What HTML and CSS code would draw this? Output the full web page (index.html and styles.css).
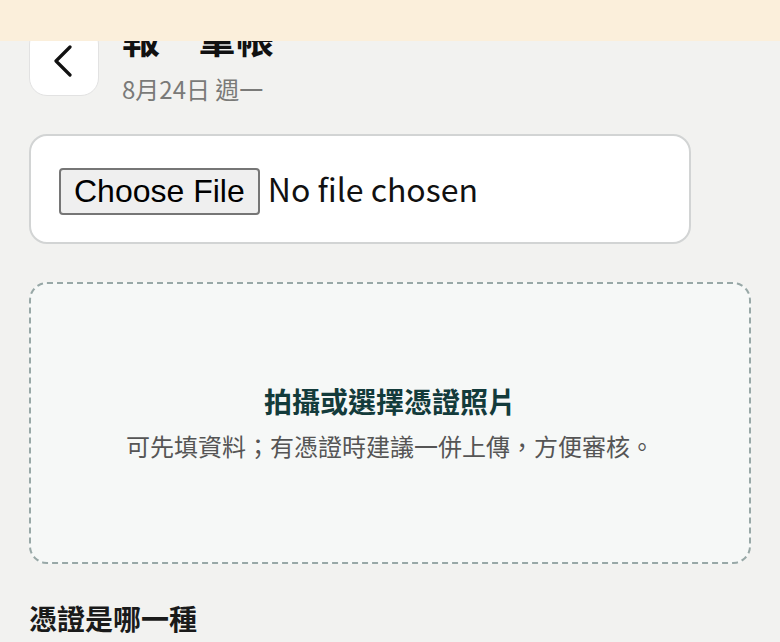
FILE: index.html
```html
<!DOCTYPE html>
<html lang="zh-Hant">
<head>
<meta charset="utf-8">
<title>報一筆帳</title>
<link rel="stylesheet" href="styles.css">
</head>
<body>
<div class="banner">
  <p class="banner-text">目前處於離線狀態，資料會先存在本機，連線後同步。<a href="#" class="banner-link">重試</a></p>
</div>
<main class="page">
  <header class="header">
    <button class="back" type="button" aria-label="返回">
      <svg width="20" height="32" viewBox="0 0 20 32" fill="none"><path d="M16 2 L2 16 L16 30" stroke="#111" stroke-width="3.2" stroke-linecap="round" stroke-linejoin="round"/></svg>
    </button>
    <div class="heading">
      <h1 class="title">報一筆帳</h1>
      <div class="date">8月24日 週一</div>
    </div>
  </header>

  <div class="file-card">
    <input class="file-input" type="file" accept="image/*">
  </div>

  <div class="drop">
    <div class="drop-title">拍攝或選擇憑證照片</div>
    <div class="drop-sub">可先填資料；有憑證時建議一併上傳，方便審核。</div>
  </div>

  <h2 class="section-title">憑證是哪一種</h2>
</main>
</body>
</html>
```
FILE: styles.css
```css
* { box-sizing: border-box; }
html, body { margin: 0; padding: 0; }
body {
  background: #f2f2f0;
  font-family: "Noto Sans CJK TC", "Noto Sans", sans-serif;
  color: #1a1a1a;
  overflow: hidden;
}
.banner {
  position: fixed;
  top: 0; left: 0; right: 0;
  height: 41px;
  background: #fbefdb;
  overflow: hidden;
  z-index: 5;
}
.banner-text {
  margin: -26px 0 0 0;
  padding-left: 222px;
  font-size: 24px;
  line-height: 24px;
  color: #c47a1c;
  white-space: nowrap;
}
.banner-link {
  color: #6a3900;
  text-decoration: underline;
  text-decoration-thickness: 2px;
}
.page {
  padding: 15px 29px 0;
}
.header {
  display: flex;
  align-items: flex-start;
  gap: 23px;
}
.back {
  margin-top: 11px;
  width: 70px;
  height: 70px;
  flex: none;
  background: #fff;
  border: 1px solid #e2e2e2;
  border-radius: 18px;
  display: flex;
  align-items: center;
  justify-content: center;
  padding: 0;
}
.heading { display: flex; flex-direction: column; }
.title {
  margin: -2px 0 0;
  font-size: 38px;
  font-weight: 700;
  line-height: 47px;
  color: #111;
}
.date {
  margin-top: 11px;
  font-size: 24px;
  line-height: 36px;
  color: #7a7a78;
}
.file-card {
  margin-top: 27px;
  width: 662px;
  height: 110px;
  background: #fff;
  border: 2px solid #d2d4d4;
  border-radius: 18px;
  padding: 29px 28px;
}
.file-input {
  font-family: "Noto Sans CJK TC", "Noto Sans", sans-serif;
  font-size: 32px;
  color: #111;
}
.file-input::file-selector-button {
  font-family: "Liberation Sans", Arial, sans-serif;
  font-size: 32px;
  padding: 3px 13px;
  margin-right: 8px;
  border: 2px solid #767676;
  border-radius: 4px;
  background: #efefef;
  color: #000;
}
.drop {
  margin-top: 38px;
  height: 282px;
  border: 2px dashed #98a8a7;
  border-radius: 18px;
  background: #f6f8f7;
  display: flex;
  flex-direction: column;
  align-items: center;
  justify-content: center;
  gap: 9px;
}
.drop-title {
  font-size: 28px;
  font-weight: 700;
  line-height: 36px;
  color: #133b3b;
}
.drop-sub {
  font-size: 24px;
  line-height: 36px;
  color: #555;
}
.section-title {
  margin: 35px 0 0;
  font-size: 28px;
  font-weight: 700;
  line-height: 38px;
  color: #1a1a1a;
}
```
